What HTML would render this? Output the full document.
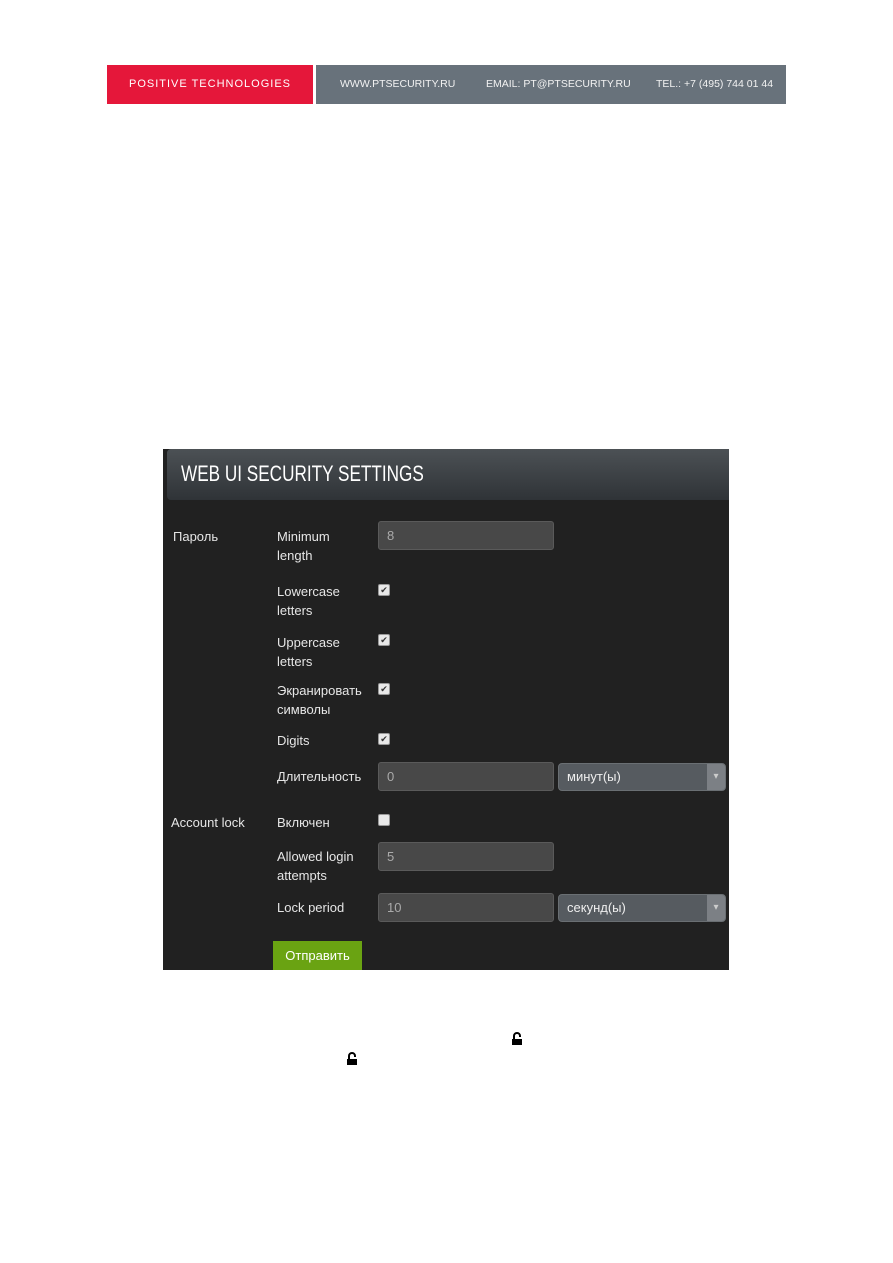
<!DOCTYPE html>
<html><head><meta charset="utf-8"><style>
body{margin:0;width:893px;height:1263px;background:#fff;position:relative;font-family:"Liberation Sans",sans-serif;overflow:hidden}
.a{position:absolute}
.red{left:107px;top:65px;width:206px;height:39px;background:#e5173a;color:#fff;font-size:11px;letter-spacing:1px;line-height:39px;text-align:center}
.gray{left:316px;top:65px;width:470px;height:39px;background:#68727b;color:#f2f2f2;font-size:10.5px;line-height:39px}
.panel{left:163px;top:449px;width:566px;height:521px;background:#212121}
.hdr{left:167px;top:449px;width:562px;height:51px;background:linear-gradient(#4c5155,#2f3337);border-radius:4px 0 0 4px;color:#fff;font-size:22px;line-height:50px;font-family:"Liberation Sans Narrow","Liberation Sans",sans-serif}
.t{color:#e6e6e6;font-size:13px;line-height:19px}
.in{background:#484848;border:1px solid #5a5a5a;border-radius:3px;color:#aaa;font-size:13px;line-height:27px;padding-left:8px;box-sizing:border-box;height:29px}
.sel{background:#565b60;border:1px solid #6a6f73;border-radius:4px;color:#eee;font-size:13px;line-height:25px;padding-left:8px;box-sizing:border-box;height:28px}
.sel:after{content:"▾";position:absolute;right:0;top:0;width:18px;height:26px;background:#7c8085;color:#ccc;font-size:10px;text-align:center;line-height:26px;border-radius:0 3px 3px 0}
.cb{width:10px;height:10px;background:#e8e8e8;border:1px solid #999;border-radius:2px;font-size:9px;line-height:10px;text-align:center;color:#333}
.btn{left:273px;top:941px;width:89px;height:29px;background:#6aa312;color:#fff;font-size:13px;line-height:29px;text-align:center}
</style></head><body>
<div class="a red">POSITIVE TECHNOLOGIES</div>
<div class="a gray"><span style="position:absolute;left:24px">WWW.PTSECURITY.RU</span><span style="position:absolute;left:170px">EMAIL: PT@PTSECURITY.RU</span><span style="position:absolute;left:340px">TEL.: +7 (495) 744 01 44</span></div>
<div class="a panel"></div>
<div class="a hdr"><span style="margin-left:14px;transform:scaleX(.78);display:inline-block;transform-origin:left">WEB UI SECURITY SETTINGS</span></div>
<div class="a t" style="left:173px;top:527px">Пароль</div>
<div class="a t" style="left:277px;top:527px">Minimum<br>length</div>
<div class="a in" style="left:378px;top:521px;width:176px">8</div>
<div class="a t" style="left:277px;top:582px">Lowercase<br>letters</div>
<div class="a cb" style="left:378px;top:584px">✔</div>
<div class="a t" style="left:277px;top:633px">Uppercase<br>letters</div>
<div class="a cb" style="left:378px;top:634px">✔</div>
<div class="a t" style="left:277px;top:681px">Экранировать<br>символы</div>
<div class="a cb" style="left:378px;top:683px">✔</div>
<div class="a t" style="left:277px;top:731px">Digits</div>
<div class="a cb" style="left:378px;top:733px">✔</div>
<div class="a t" style="left:277px;top:767px">Длительность</div>
<div class="a in" style="left:378px;top:762px;width:176px">0</div>
<div class="a sel" style="left:558px;top:763px;width:168px">минут(ы)</div>
<div class="a t" style="left:171px;top:813px">Account lock</div>
<div class="a t" style="left:277px;top:813px">Включен</div>
<div class="a cb" style="left:378px;top:814px"></div>
<div class="a t" style="left:277px;top:847px">Allowed login<br>attempts</div>
<div class="a in" style="left:378px;top:842px;width:176px">5</div>
<div class="a t" style="left:277px;top:898px">Lock period</div>
<div class="a in" style="left:378px;top:893px;width:176px">10</div>
<div class="a sel" style="left:558px;top:894px;width:168px">секунд(ы)</div>
<div class="a btn">Отправить</div>
<svg class="a" style="left:511px;top:1032px" width="13" height="14" viewBox="0 0 13 14"><path d="M3 7V4a3 3 0 0 1 6 0v1" fill="none" stroke="#000" stroke-width="2"/><rect x="1" y="7" width="10" height="6" fill="#000"/></svg>
<svg class="a" style="left:346px;top:1052px" width="13" height="14" viewBox="0 0 13 14"><path d="M3 7V4a3 3 0 0 1 6 0v1" fill="none" stroke="#000" stroke-width="2"/><rect x="1" y="7" width="10" height="6" fill="#000"/></svg>
</body></html>
